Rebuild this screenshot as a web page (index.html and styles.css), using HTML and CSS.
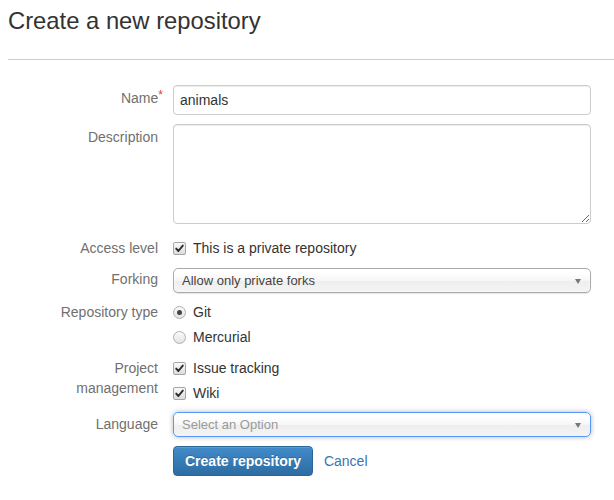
FILE: index.html
```html
<!DOCTYPE html>
<html>
<head>
<meta charset="utf-8">
<link rel="stylesheet" href="styles.css">
</head>
<body>
<div class="page">
  <h1 class="title">Create a new repository</h1>
  <hr class="rule">
  <form class="form">
    <div class="group g-name">
      <label class="label l-input">Name<span class="req">*</span></label>
      <div class="control"><input class="text-input" type="text" value="animals"></div>
    </div>
    <div class="group g-desc">
      <label class="label l-area">Description</label>
      <div class="control"><textarea class="textarea"></textarea></div>
    </div>
    <div class="group g-access">
      <label class="label l-opt">Access level</label>
      <div class="control">
        <div class="option"><span class="box checked"><svg viewBox="0 0 13 13" width="13" height="13"><path d="M3.2 6.6 L5.4 9 L9.8 3.6" fill="none" stroke="#2b2b2b" stroke-width="1.9" stroke-linecap="round" stroke-linejoin="round"/></svg></span><span class="opt-text">This is a private repository</span></div>
      </div>
    </div>
    <div class="group g-fork">
      <label class="label l-select">Forking</label>
      <div class="control">
        <div class="select"><span class="select-text">Allow only private forks</span><span class="arrow"></span></div>
      </div>
    </div>
    <div class="group g-type">
      <label class="label l-opt">Repository type</label>
      <div class="control options">
        <div class="option"><span class="radio on"><span class="dot"></span></span><span class="opt-text">Git</span></div>
        <div class="option"><span class="radio"></span><span class="opt-text">Mercurial</span></div>
      </div>
    </div>
    <div class="group g-proj">
      <label class="label l-opt">Project<br>management</label>
      <div class="control options">
        <div class="option"><span class="box checked"><svg viewBox="0 0 13 13" width="13" height="13"><path d="M3.2 6.6 L5.4 9 L9.8 3.6" fill="none" stroke="#2b2b2b" stroke-width="1.9" stroke-linecap="round" stroke-linejoin="round"/></svg></span><span class="opt-text">Issue tracking</span></div>
        <div class="option"><span class="box checked"><svg viewBox="0 0 13 13" width="13" height="13"><path d="M3.2 6.6 L5.4 9 L9.8 3.6" fill="none" stroke="#2b2b2b" stroke-width="1.9" stroke-linecap="round" stroke-linejoin="round"/></svg></span><span class="opt-text">Wiki</span></div>
      </div>
    </div>
    <div class="group g-lang">
      <label class="label l-select2">Language</label>
      <div class="control">
        <div class="select focus"><span class="select-text placeholder">Select an Option</span><span class="arrow"></span></div>
      </div>
    </div>
    <div class="group g-actions">
      <div class="label"></div>
      <div class="control actions">
        <button type="button" class="btn-primary">Create repository</button>
        <a class="cancel" href="#">Cancel</a>
      </div>
    </div>
  </form>
</div>
</body>
</html>
```

FILE: styles.css
```css
html, body {
  margin: 0;
  padding: 0;
  background: #fff;
}
body {
  font-family: "Liberation Sans", Arial, sans-serif;
  font-size: 14px;
  color: #333;
}
.page {
  padding: 7px 0 0 8px;
}
.title {
  margin: 0;
  font-size: 23.8px;
  line-height: 28px;
  font-weight: normal;
  color: #333;
}
.rule {
  margin: 24px 0 0 0;
  border: 0;
  border-top: 1px solid #ccc;
  height: 0;
}
.form {
  display: flex;
  flex-direction: column;
  padding-top: 25px;
  width: 583px;
}
.group {
  display: flex;
  align-items: flex-start;
}
.label {
  width: 150px;
  flex: none;
  text-align: right;
  color: #707070;
  line-height: 20px;
  margin-right: 15px;
}
.l-input { padding-top: 3px; }
.l-area { padding-top: 3px; }
.l-opt { padding-top: 0; }
.l-select { padding-top: 1px; }
.l-select2 { padding-top: 2px; }
.req {
  color: #d04437;
  font-size: 12px;
  vertical-align: top;
  line-height: 14px;
  margin-right: -5px;
}
.control {
  flex: 1;
  min-width: 0;
}
.g-name { margin-bottom: 9px; }
.g-desc { margin-bottom: 14px; }
.g-access { margin-bottom: 10px; }
.g-fork { margin-bottom: 9px; }
.g-type { margin-bottom: 11px; }
.g-proj { margin-bottom: 9px; }
.g-lang { margin-bottom: 9px; }

.text-input {
  display: block;
  box-sizing: border-box;
  width: 100%;
  height: 30px;
  margin: 0;
  padding: 0 6px;
  border: 1px solid #ccc;
  border-radius: 4px;
  font-family: inherit;
  font-size: 14px;
  color: #333;
  box-shadow: inset 0 1px 1px rgba(0,0,0,0.075);
  outline: none;
}
.textarea {
  display: block;
  box-sizing: border-box;
  width: 100%;
  height: 100px;
  margin: 0;
  padding: 6px;
  border: 1px solid #ccc;
  border-radius: 4px;
  font-family: inherit;
  font-size: 14px;
  box-shadow: inset 0 1px 1px rgba(0,0,0,0.075);
  outline: none;
}
.options {
  display: flex;
  flex-direction: column;
  gap: 5px;
}
.option {
  display: flex;
  align-items: center;
  height: 20px;
  line-height: 20px;
}
.opt-text {
  color: #333;
  margin-left: 7px;
}
.box {
  width: 13px;
  height: 13px;
  box-sizing: border-box;
  border: 1px solid #a6a6a6;
  border-radius: 2px;
  background: linear-gradient(#fafafa, #dcdcdc);
  position: relative;
  flex: none;
}
.box svg {
  position: absolute;
  left: -1px;
  top: -1px;
}
.radio {
  width: 13px;
  height: 13px;
  box-sizing: border-box;
  border: 1px solid #b0b0b0;
  border-radius: 50%;
  background: linear-gradient(#fbfbfb, #e2e2e2);
  display: flex;
  align-items: center;
  justify-content: center;
  flex: none;
}
.dot {
  width: 5px;
  height: 5px;
  border-radius: 50%;
  background: #444;
}
.select {
  box-sizing: border-box;
  height: 25px;
  border: 1px solid #aaa;
  border-radius: 5px;
  background: linear-gradient(#fff 20%, #f6f6f6 50%, #eee 52%, #f4f4f4 100%);
  box-shadow: inset 0 0 3px #fff, 0 1px 1px rgba(0,0,0,0.1);
  display: flex;
  align-items: center;
  justify-content: space-between;
  padding: 0 9px 0 8px;
}
.select.focus {
  border-color: #5897fb;
  box-shadow: 0 0 5px rgba(0,0,0,0.3);
}
.select-text {
  font-size: 13px;
  color: #444;
  line-height: 23px;
}
.placeholder {
  color: #999;
}
.arrow {
  width: 0;
  height: 0;
  border-left: 3.5px solid transparent;
  border-right: 3.5px solid transparent;
  border-top: 5px solid #777;
  margin-top: 1px;
}
.actions {
  display: flex;
  align-items: center;
}
.btn-primary {
  height: 30px;
  padding: 0 11px;
  border: 1px solid #2b669a;
  border-radius: 4px;
  background: linear-gradient(#428bca, #2d6ca2);
  color: #fff;
  font-family: inherit;
  font-size: 14px;
  font-weight: bold;
  box-shadow: inset 0 1px 0 rgba(255,255,255,0.15), 0 1px 1px rgba(0,0,0,0.075);
  text-shadow: 0 -1px 0 rgba(0,0,0,0.2);
}
.cancel {
  margin-left: 11px;
  color: #3a74b4;
  text-decoration: none;
}
```
